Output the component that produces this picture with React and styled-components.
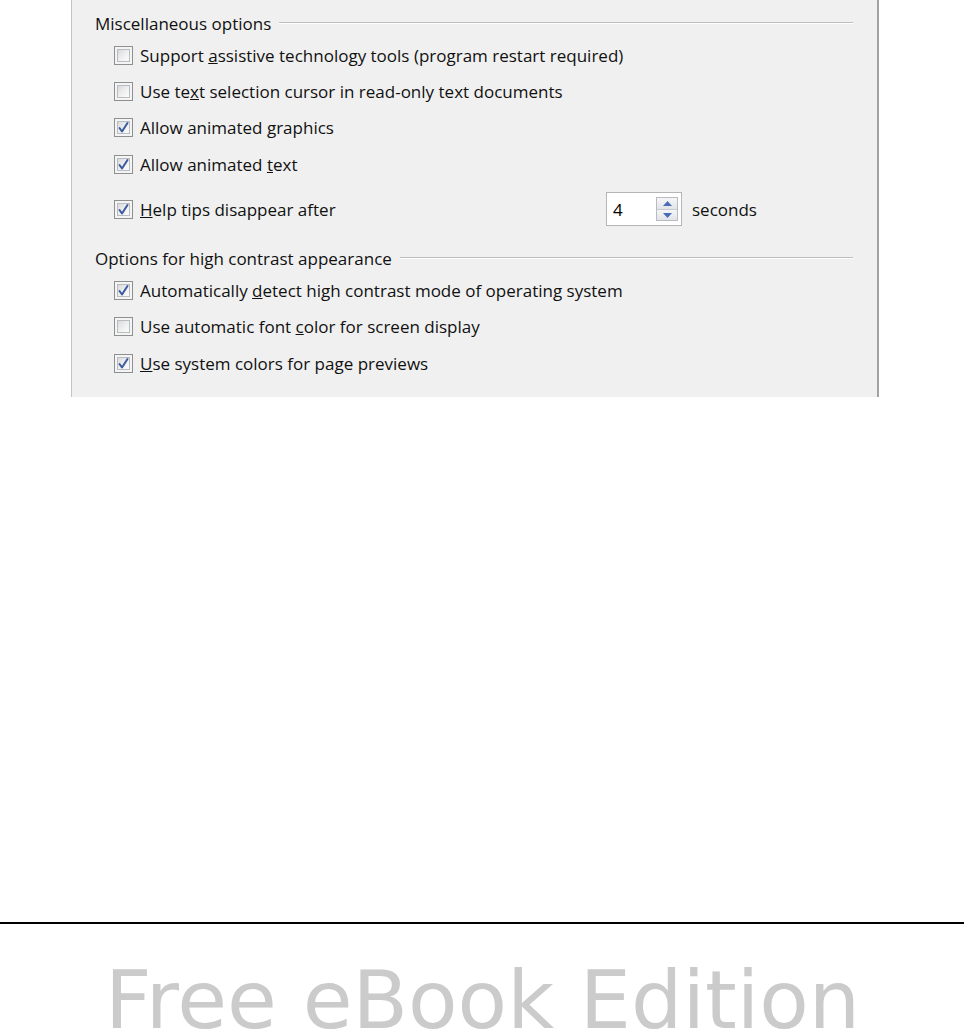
import React from 'react';
import styled, { createGlobalStyle } from 'styled-components';

const GlobalStyle = createGlobalStyle`
  body {
    margin: 0;
    background: #ffffff;
  }
`;

const options1 = [
  { label: ['Support ', 'a', 'ssistive technology tools (program restart required)'], checked: false },
  { label: ['Use te', 'x', 't selection cursor in read-only text documents'], checked: false },
  { label: ['Allow animated ', 'g', 'raphics'], checked: true },
  { label: ['Allow animated ', 't', 'ext'], checked: true },
];

const options2 = [
  { label: ['Automatically ', 'd', 'etect high contrast mode of operating system'], checked: true },
  { label: ['Use automatic font ', 'c', 'olor for screen display'], checked: false },
  { label: ['', 'U', 'se system colors for page previews'], checked: true },
];

function Check({ checked }) {
  return (
    <Box>
      <BoxInner>
        {checked && (
          <svg width="13" height="13" viewBox="0 0 13 13">
            <path d="M2.5 7 L5 10.5 L10.5 2" fill="none" stroke="#3c5aa0" strokeWidth="2" strokeLinecap="round" strokeLinejoin="round" />
          </svg>
        )}
      </BoxInner>
    </Box>
  );
}

function Label({ parts }) {
  return (
    <span>
      {parts[0]}
      <u>{parts[1]}</u>
      {parts[2]}
    </span>
  );
}

function OptionRow({ label, checked }) {
  return (
    <Row>
      <Check checked={checked} />
      <Label parts={label} />
    </Row>
  );
}

export default function App() {
  return (
    <Page>
      <GlobalStyle />
      <Panel>
        <Heading>
          <HeadingText>Miscellaneous options</HeadingText>
          <Rule />
        </Heading>
        {options1.map((o, i) => (
          <OptionRow key={i} {...o} />
        ))}
        <Row $height={53.6}>
          <LabelCell>
            <Check checked />
            <Label parts={['', 'H', 'elp tips disappear after']} />
          </LabelCell>
          <Spin>
            <SpinValue>4</SpinValue>
            <SpinButtons>
              <SpinButton>
                <svg width="9" height="5" viewBox="0 0 9 5"><path d="M0 5 L4.5 0 L9 5 Z" fill="#4a6cb8" /></svg>
              </SpinButton>
              <SpinButton>
                <svg width="9" height="5" viewBox="0 0 9 5"><path d="M0 0 L4.5 5 L9 0 Z" fill="#4a6cb8" /></svg>
              </SpinButton>
            </SpinButtons>
          </Spin>
          <Unit>seconds</Unit>
        </Row>
        <Heading $top={8}>
          <HeadingText>Options for high contrast appearance</HeadingText>
          <Rule />
        </Heading>
        {options2.map((o, i) => (
          <OptionRow key={i} {...o} />
        ))}
      </Panel>
      <Footer>
        <FooterText>Free eBook Edition</FooterText>
      </Footer>
    </Page>
  );
}

const Page = styled.div`
  display: flex;
  flex-direction: column;
  height: 1034px;
  overflow: hidden;
  font-family: "Open Sans", "Noto Sans", sans-serif;
  font-size: 17px;
  color: #111;
`;

const Panel = styled.div`
  margin-left: 71px;
  width: 808px;
  height: 397px;
  flex-shrink: 0;
  box-sizing: border-box;
  padding: 9px 24px 0 23px;
  background: #f0f0f0;
  border-left: 1px solid #c4c4c4;
  border-right: 2px solid #a2a2a2;
  display: flex;
  flex-direction: column;
`;

const Heading = styled.div`
  display: flex;
  align-items: center;
  height: 28px;
  flex-shrink: 0;
  margin-top: ${(p) => p.$top || 0}px;
`;

const HeadingText = styled.span`
  white-space: nowrap;
  padding-right: 8px;
`;

const Rule = styled.div`
  flex: 1;
  height: 0;
  border-top: 1px solid #bdbdbd;
  border-bottom: 1px solid #fff;
`;

const Row = styled.div`
  display: flex;
  align-items: center;
  gap: 7px;
  height: ${(p) => p.$height || 36.4}px;
  padding-left: 19px;
  flex-shrink: 0;
  white-space: nowrap;
`;

const LabelCell = styled.div`
  display: flex;
  align-items: center;
  gap: 7px;
  width: 485px;
`;

const Box = styled.div`
  width: 19px;
  height: 19px;
  box-sizing: border-box;
  border: 1px solid #8e8f8f;
  background: #f4f4f4;
  padding: 2px;
  flex-shrink: 0;
`;

const BoxInner = styled.div`
  width: 13px;
  height: 13px;
  box-sizing: border-box;
  border: 1px solid #b9bdc2;
  background: linear-gradient(135deg, #d8dadd 0%, #f0f0f0 55%, #fbfbfb 100%);
  display: flex;
  align-items: center;
  justify-content: center;
  svg {
    display: block;
    margin: -1px;
  }
`;

const Spin = styled.div`
  display: flex;
  align-items: center;
  justify-content: space-between;
  width: 76px;
  height: 34px;
  box-sizing: border-box;
  border: 1px solid #b5b5b5;
  background: #fff;
  padding: 0 3px 0 6px;
`;

const SpinValue = styled.span`
  color: #000;
`;

const SpinButtons = styled.div`
  display: flex;
  flex-direction: column;
  width: 22px;
  height: 24px;
  border: 1px solid #b8bcc2;
  box-sizing: border-box;
`;

const SpinButton = styled.div`
  flex: 1;
  display: flex;
  align-items: center;
  justify-content: center;
  background: linear-gradient(#f6f6f6, #e2e4e8);
  & + & {
    border-top: 1px solid #c8ccd2;
  }
`;

const Unit = styled.span`
  margin-left: 3px;
`;

const Footer = styled.div`
  flex-shrink: 0;
  margin-top: 525px;
  border-top: 2px solid #000;
  padding: 44px 0 0 105px;
`;

const FooterText = styled.div`
  font-family: "DejaVu Sans", sans-serif;
  font-size: 81px;
  line-height: 64px;
  color: #cbcbcb;
  white-space: nowrap;
`;
